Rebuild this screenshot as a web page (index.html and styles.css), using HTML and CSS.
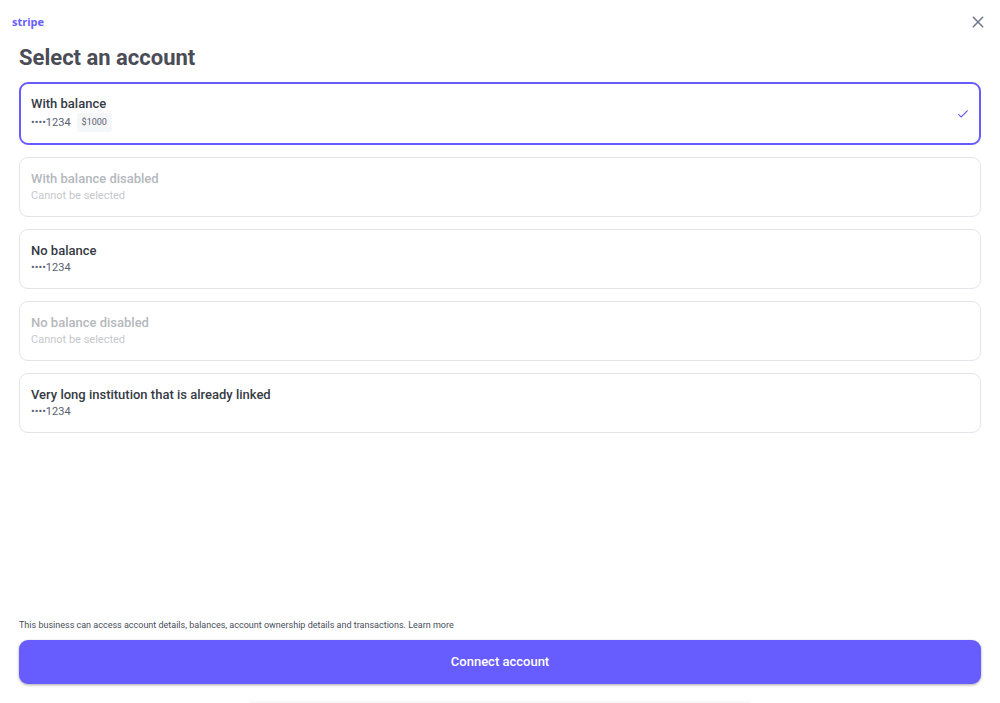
FILE: index.html
```html
<!DOCTYPE html>
<html lang="en">
<head>
<meta charset="utf-8">
<meta name="viewport" content="width=device-width, initial-scale=1">
<title>Select an account</title>
<link rel="stylesheet" href="styles.css">
</head>
<body>
<div class="page">
  <header class="topbar">
    <span class="logo">stripe</span>
    <button class="close" type="button" aria-label="Close">
      <svg viewBox="0 0 12 12" width="12" height="12"><path d="M1.3 1.3 10.7 10.7M10.7 1.3 1.3 10.7"/></svg>
    </button>
  </header>
  <main class="content">
    <h1 class="title">Select an account</h1>
    <div class="accounts">
      <button class="account selected" type="button" aria-pressed="true">
        <span class="info">
          <span class="name">With balance</span>
          <span class="detail">••••1234 <span class="balance">$1000</span></span>
        </span>
        <svg class="check" viewBox="0 0 10 8" width="10" height="8"><path d="M.7 4.6 3.2 7 9.3.8"/></svg>
      </button>
      <button class="account" type="button" disabled>
        <span class="info">
          <span class="name">With balance disabled</span>
          <span class="detail">Cannot be selected</span>
        </span>
      </button>
      <button class="account" type="button" aria-pressed="false">
        <span class="info">
          <span class="name">No balance</span>
          <span class="detail">••••1234</span>
        </span>
      </button>
      <button class="account" type="button" disabled>
        <span class="info">
          <span class="name">No balance disabled</span>
          <span class="detail">Cannot be selected</span>
        </span>
      </button>
      <button class="account" type="button" aria-pressed="false">
        <span class="info">
          <span class="name">Very long institution that is already linked</span>
          <span class="detail">••••1234</span>
        </span>
      </button>
    </div>
  </main>
  <footer class="footer">
    <p class="notice">This business can access account details, balances, account ownership details and transactions. <a href="#learn">Learn more</a></p>
    <button class="connect" type="button">Connect account</button>
  </footer>
  <div class="edge"></div>
</div>
</body>
</html>
```
FILE: styles.css
```css
* {
  box-sizing: border-box;
}

body {
  margin: 0;
  background: #fff;
  color: #353a44;
  font-family: Roboto, "Liberation Sans", sans-serif;
}

button {
  font: inherit;
  color: inherit;
}

.page {
  display: flex;
  flex-direction: column;
  min-height: 100vh;
}

.topbar {
  display: flex;
  align-items: center;
  justify-content: space-between;
  height: 44px;
  padding: 0 16px 0 12px;
}

.logo {
  color: #675dff;
  font: 700 11px/16px "Open Sans", sans-serif;
}

.close {
  display: flex;
  padding: 0;
  border: 0;
  background: none;
}

.close svg {
  fill: none;
  stroke: #6c7688;
  stroke-width: 1.5;
  stroke-linecap: round;
}

.content {
  flex: 1;
  padding: 0 19px;
}

.title {
  margin: 0 0 10px;
  color: #4a4c56;
  font-size: 22px;
  font-weight: 700;
  line-height: 28px;
}

.accounts {
  display: flex;
  flex-direction: column;
  gap: 12px;
}

.account {
  display: flex;
  align-items: center;
  justify-content: space-between;
  padding: 12px 11px;
  border: 1px solid #e2e5ea;
  border-radius: 9px;
  background: #fff;
  text-align: left;
}

.account.selected {
  padding: 11px 11px 11px 10px;
  border: 2px solid #675dff;
}

.account:disabled {
  color: #b5b8bd;
}

.info {
  display: flex;
  flex-direction: column;
}

.name {
  font-size: 13px;
  font-weight: 500;
  line-height: 18px;
}

.detail {
  display: flex;
  align-items: center;
  gap: 6px;
  color: #596171;
  font-size: 11px;
  line-height: 16px;
}

.account:disabled .detail {
  color: #c5c8ce;
}

.balance {
  padding: 1px 5px;
  border-radius: 3px;
  background: #f5f6f8;
  font-size: 9px;
  line-height: 17px;
}

.check {
  fill: none;
  stroke: #675dff;
  stroke-width: 1.2;
  stroke-linecap: round;
}

.footer {
  padding: 0 19px 17px;
}

.notice {
  margin: 0 0 8px;
  color: #474e5a;
  font-size: 9px;
  line-height: 14px;
}

.notice a {
  color: inherit;
  text-decoration: none;
}

.connect {
  display: block;
  width: 100%;
  padding: 13px;
  border: 0;
  border-radius: 9px;
  background: #675dff;
  box-shadow: 0 1px 3px rgba(0, 0, 0, 0.35);
  color: #fff;
  font-size: 13px;
  font-weight: 500;
  line-height: 18px;
}

.edge {
  width: 50%;
  height: 2px;
  margin: 0 auto;
  background: #f8f8f8;
}
```
